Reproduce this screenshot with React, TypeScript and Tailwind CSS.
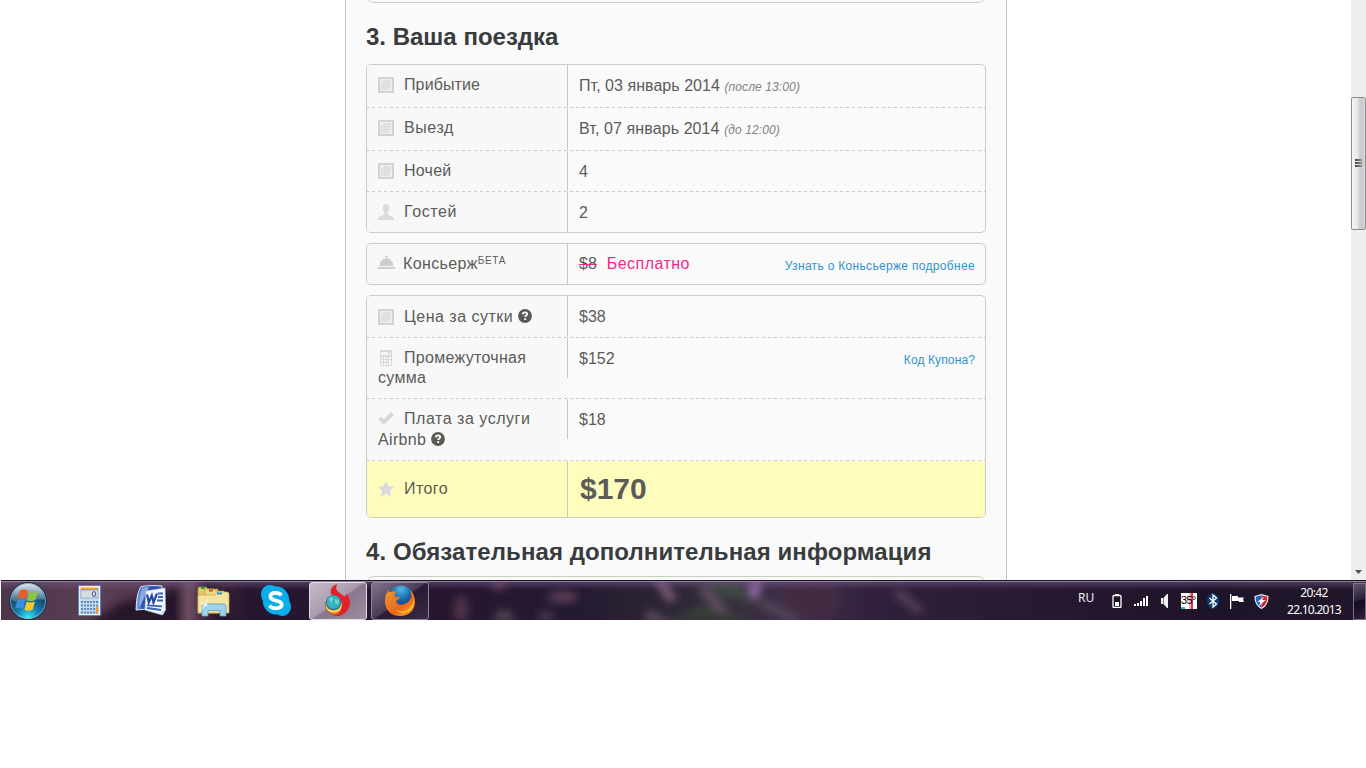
import type { ReactNode } from 'react'

const CalendarIcon = () => (
  <svg width="16" height="16" viewBox="0 0 16 16" className="inline-block align-top mt-[2px] mr-[10px]">
    <rect width="16" height="16" fill="#d2d2d2" />
    <rect x="2" y="2" width="12" height="12" fill="#f0f0f0" />
    <path d="M5 3h8v7h-2v3H3V5h2z" fill="#dddddd" />
    <path d="M5.500 3v10M8.500 3v10M11.500 3v10M3 5.500h10M3 8.500h10M3 11.500h10" stroke="#e8e8e8" strokeWidth=".6" />
  </svg>
)

const GuestIcon = () => (
  <svg width="16" height="16" viewBox="0 0 16 16" className="inline-block align-top mt-[2px] mr-[10px]">
    <path
      d="M8 0C5.700 0 4.600 1.600 4.700 4c.1 2.200 1 3.700 1.600 4.400v2.100c-.6.9-4.600 1.300-5.800 3C.1 14.200 0 15 0 16h16c0-1-.1-1.800-.5-2.500-1.200-1.700-5.200-2.100-5.800-3V8.400c.6-.7 1.500-2.200 1.600-4.400.1-2.400-1-4-3.300-4z"
      fill="#dcdcdc"
    />
  </svg>
)

const BellIcon = () => (
  <svg width="17" height="16" viewBox="0 0 17 16" className="inline-block align-top mt-[2px] mr-[8px]">
    <path d="M7 0h3v1H9v1.200c3.800.4 6.200 3.600 6.500 7.800h-14C1.800 5.800 4.200 2.600 8 2.200V1H7z" fill="#cecece" />
    <rect y="11" width="17" height="2" fill="#cecece" />
  </svg>
)

const CalculatorIcon = () => (
  <svg width="16" height="16" viewBox="0 0 16 16" className="inline-block align-top mt-[2px] mr-[10px]">
    <rect x="2" width="12" height="16" fill="#d9d9d9" />
    <rect x="3" y="2" width="10" height="3" fill="#f7f7f7" />
    <rect x="10" y="2" width="2" height="2" fill="#d9d9d9" />
    <path
      d="M3 7h2v2H3zM6 7h2v2H6zM9 7h1v2H9zM11 7h2v2h-2zM3 10h2v2H3zM6 10h2v2H6zM9 10h1v2H9zM11 10h2v5h-2zM3 13h2v2H3zM6 13h2v2H6zM9 13h1v2H9z"
      fill="#f7f7f7"
    />
  </svg>
)

const CheckIcon = () => (
  <svg width="16" height="16" viewBox="0 0 16 16" className="inline-block align-top mt-[2px] mr-[10px]">
    <path d="M1.500 8l4.300 4L14.500 3.500" fill="none" stroke="#d6d6d6" strokeWidth="4" />
  </svg>
)

const StarIcon = () => (
  <svg width="16" height="16" viewBox="0 0 16 16" className="inline-block align-top mt-[2px] mr-[10px]">
    <path
      d="M8 0l2.400 5 5.600.8-4 3.900 1 5.800-5-2.700-5 2.700 1-5.800-4-3.900L5.600 5z"
      fill="#dadade"
      stroke="#e6e6e8"
      strokeWidth=".6"
    />
  </svg>
)

const HelpIcon = ({ className = '' }: { className?: string }) => (
  <svg width="14" height="14" viewBox="0 0 14 14" className={`inline-block align-top ml-[4.500px] ${className}`}>
    <circle cx="7" cy="7" r="6.900" fill="#5a5a55" />
    <path d="M4.700 5.400c.1-1.300 1-2 2.300-2s2.200.7 2.200 1.700c0 1.500-2 1.500-2 3" fill="none" stroke="#fafafa" strokeWidth="1.900" />
    <rect x="6.200" y="9.200" width="2" height="1.800" fill="#fafafa" />
  </svg>
)

type RowProps = {
  label: ReactNode
  children: ReactNode
  height: string
  labelClass?: string
  valueClass?: string
  dividerClass?: string
  total?: boolean
  last?: boolean
}

function Row({
  label,
  children,
  height,
  labelClass = 'pt-[10px]',
  valueClass = 'pt-[11px]',
  dividerClass = 'h-full',
  total,
  last,
}: RowProps) {
  return (
    <div>
      <div className={`flex ${height} ${total ? 'bg-[#fffdbc]' : ''}`}>
        <div className={`w-[200px] shrink-0 pl-[11px] whitespace-nowrap ${total ? '' : 'bg-[#f8f8f8]'} ${labelClass}`}>
          {label}
        </div>
        <div className={`w-px shrink-0 bg-[#c9c9c4] ${dividerClass}`} />
        <div className={`flex-1 flex items-start justify-between pl-[11px] pr-[10px] whitespace-nowrap ${valueClass}`}>
          {children}
        </div>
      </div>
      {!last && (
        <div className="h-px bg-[repeating-linear-gradient(90deg,#c9c9c9_0_2px,transparent_2px_5px,#c9c9c9_5px_6px)]" />
      )}
    </div>
  )
}

function Box({ children, className = '' }: { children: ReactNode; className?: string }) {
  return (
    <div className={`border border-[#cbccc5] rounded-[5px] overflow-hidden text-[16px] leading-[20px] text-[#5b5b57] ${className}`}>
      {children}
    </div>
  )
}

function Booking() {
  return (
    <main className="ml-[345px] w-[662px] h-[580px] shrink-0 border-x border-[#c3c3c3] bg-[#fafafa] px-5 overflow-hidden">
      <div className="-mt-[17px] h-[20px] border border-[#cbccc5] rounded-[8px]" />
      <h2 className="mt-[20px] h-[28px] text-[24px] leading-[28px] font-bold text-[#393c3d] whitespace-nowrap">
        3. Ваша поездка
      </h2>

      <Box className="mt-[13px]">
        <Row height="h-[42px]" label={<><CalendarIcon /><span className="tracking-[0.12px]">Прибытие</span></>}>
          <span className="tracking-[0.04px]">
            Пт, 03 январь 2014 <i className="text-[12px] tracking-[0.12px] text-[#82837f]">(после 13:00)</i>
          </span>
        </Row>
        <Row height="h-[42px]" label={<><CalendarIcon /><span className="tracking-[0.6px]">Выезд</span></>}>
          <span className="tracking-[0.1px]">
            Вт, 07 январь 2014 <i className="text-[12px] tracking-[0.1px] text-[#82837f]">(до 12:00)</i>
          </span>
        </Row>
        <Row height="h-[40px]" label={<><CalendarIcon /><span className="tracking-[0.25px]">Ночей</span></>}>4</Row>
        <Row height="h-[40px]" label={<><GuestIcon /><span className="tracking-[0.6px]">Гостей</span></>} last>2</Row>
      </Box>

      <Box className="mt-[10px]">
        <Row
          height="h-[40px]"
          valueClass="pt-[10px]"
          label={
            <>
              <BellIcon />
              <span className="tracking-[0.37px]">Консьерж</span>
              <span className="inline-block align-top text-[10px] leading-[14px] tracking-[0.6px]">БЕТА</span>
            </>
          }
          last
        >
          <span>
            <span className="line-through decoration-[#ed2690]">$8</span>
            <span className="ml-[10px] tracking-[0.45px] text-[#f5288f]">Бесплатно</span>
          </span>
          <a className="text-[12px] leading-[24px] tracking-[0.32px] text-[#2f93cf]">Узнать о Коньсьерже подробнее</a>
        </Row>
      </Box>

      <Box className="mt-[10px]">
        <Row
          height="h-[41px]"
          labelClass="pt-[11px]"
          label={<><CalendarIcon /><span className="tracking-[0.48px]">Цена за сутки</span><HelpIcon className="mt-[2px]" /></>}
        >
          $38
        </Row>
        <Row
          height="h-[60px]"
          dividerClass="h-[40px]"
          label={<span className="tracking-[0.3px]"><CalculatorIcon />Промежуточная<br />сумма</span>}
        >
          <span>$152</span>
          <a className="text-[12px] leading-[22px] tracking-[0.12px] text-[#2f93cf]">Код Купона?</a>
        </Row>
        <Row
          height="h-[61px]"
          dividerClass="h-[40px]"
          labelClass="pt-[9px] leading-[21px]"
          label={
            <>
              <CheckIcon /><span className="tracking-[0.53px]">Плата за услуги</span>
              <br />
              <span className="tracking-[0.35px]">Airbnb</span><HelpIcon className="mt-[3px]" />
            </>
          }
        >
          $18
        </Row>
        <Row
          height="h-[56px]"
          labelClass="pt-[18px]"
          valueClass="pt-[8px]"
          label={<><StarIcon /><span className="tracking-[0.4px]">Итого</span></>}
          total
          last
        >
          <b className="ml-px text-[30px] leading-[40px]">$170</b>
        </Row>
      </Box>

      <h2 className="mt-[20px] h-[28px] text-[24px] leading-[28px] font-bold text-[#393c3d] tracking-[0.08px] whitespace-nowrap">
        4. Обязательная дополнительная информация
      </h2>
      <div className="mt-[10px] h-5 border border-[#cbccc5] rounded-[8px]" />
    </main>
  )
}

function Scrollbar() {
  return (
    <div className="w-[15px] h-[580px] shrink-0 bg-[#efefef] flex flex-col items-center">
      <div className="mt-[97px] h-[133px] w-full border border-[#8b8b8e] rounded-[2px] bg-[linear-gradient(90deg,#f6f6f6,#e6e6e8_45%,#cdcdd1_60%,#c9c9cd_85%,#e0e0e3)] flex flex-col items-center justify-center gap-px pb-[2px]">
        <div className="w-[7px] h-[2px] bg-[linear-gradient(90deg,#444,#999)]" />
        <div className="w-[7px] h-[2px] bg-[linear-gradient(90deg,#444,#999)]" />
        <div className="w-[7px] h-[2px] bg-[linear-gradient(90deg,#444,#999)]" />
      </div>
      <svg width="7" height="4" viewBox="0 0 7 4" className="mt-[340px]">
        <path d="M0 0h7L3.500 4z" fill="#505050" />
      </svg>
    </div>
  )
}

const StartOrb = () => (
  <svg width="38" height="38" viewBox="0 0 38 38" className="ml-[8px]">
    <defs>
      <radialGradient id="orb" cx="50%" cy="95%" r="90%">
        <stop offset="0" stopColor="#3fe4f7" />
        <stop offset=".35" stopColor="#137fae" />
        <stop offset=".7" stopColor="#174569" />
        <stop offset="1" stopColor="#6d8ca4" />
      </radialGradient>
      <linearGradient id="gloss" x2="0" y2="1">
        <stop offset="0" stopColor="#fff" stopOpacity=".75" />
        <stop offset="1" stopColor="#b9d4e6" stopOpacity=".25" />
      </linearGradient>
    </defs>
    <circle cx="19" cy="19" r="18.500" fill="url(#orb)" stroke="#1c2738" />
    <circle cx="19" cy="19" r="17.500" fill="none" stroke="#8fc4de" strokeOpacity=".7" />
    <path d="M2.500 18C3 8 10 2 19 2s16 6 16.500 16C26 15 12 23 2.500 18z" fill="url(#gloss)" />
    <path d="M11 8.500c2.700-1.500 5.400-1.400 7.800.2l-2.200 8.500c-2.500-1.600-5.100-1.600-7.800-.3z" fill="#ee5b22" />
    <path d="M20.200 9.700c2.700 1.400 5.600 1.400 8.500-.1l-2.300 8.500c-2.700 1.400-5.600 1.400-8.300-.2z" fill="#8cc63c" />
    <path d="M8.300 18.400c2.700-1.400 5.300-1.300 7.800.2L14 27c-2.500-1.600-5.200-1.600-7.900-.2z" fill="#3c8fe0" />
    <path d="M17.600 19.400c2.700 1.400 5.600 1.400 8.300 0l-2.200 8.300c-2.800 1.500-5.600 1.400-8.300 0z" fill="#fdc62b" />
  </svg>
)

const CalcApp = () => (
  <svg width="24" height="32" viewBox="0 0 24 32" className="ml-[31px]">
    <rect x=".5" y=".5" width="22" height="30" rx="1" fill="#c5dcf0" stroke="#5387ba" />
    <rect x="1.500" y="1.500" width="20" height="28" fill="none" stroke="#e8f3fc" />
    <rect x="3" y="3" width="17" height="2" fill="#f09a34" />
    <rect x="3" y="5" width="17" height="8" fill="#d5dce2" stroke="#8c98a5" strokeWidth=".7" />
    <ellipse cx="16" cy="9" rx="1.700" ry="2.500" fill="none" stroke="#3d5b80" />
    {[16, 19.500, 23, 26.500].map((y) =>
      [3, 6, 9, 12, 15, 18].map((x) => (
        <rect key={`${x}-${y}`} x={x} y={y} width="2" height="2" fill="#5d87b8" />
      )),
    )}
    <rect x="17.800" y="22" width="2.500" height="6.500" fill="#f39821" />
  </svg>
)

const WordApp = () => (
  <svg width="32" height="32" viewBox="0 0 32 32" className="ml-[33px]">
    <defs>
      <linearGradient id="wordBack">
        <stop offset="0" stopColor="#8db4ec" />
        <stop offset=".25" stopColor="#2b57b4" />
        <stop offset="1" stopColor="#2a50a2" />
      </linearGradient>
    </defs>
    <path d="M6 1.500C12 .5 20 .3 27 1l-1 22L1 25C1.500 16 2 8 6 1.500z" fill="url(#wordBack)" stroke="#dce9fa" />
    <path d="M7 2.500C5 9 4.500 16 4 22c4-5 6-12 10-20z" fill="#c4dafa" fillOpacity=".6" />
    <path d="M11 6l19-3 .5 22-3 5L10 25z" fill="#f4f7fd" stroke="#b6c8e4" strokeWidth=".7" />
    <path d="M12 9.500l1.800 8 3-7 1.700 7L22 8.500" fill="none" stroke="#27499b" strokeWidth="2.200" />
    <path d="M23 8.500h5M23 12h5M22 15.500h6M12 20.300l15 1M12 23l14 2" stroke="#3463b8" strokeWidth="1.800" />
    <path d="M27.500 30l3-5-4 1z" fill="#c9d7ed" />
  </svg>
)

const ExplorerApp = () => (
  <svg width="34" height="32" viewBox="0 0 34 32" className="ml-[30px]">
    <path d="M1 4c0-1 .6-2 1.600-2H9l2 2h10v24H1z" fill="#e6c96c" stroke="#a98e3d" strokeWidth=".7" />
    <rect x="4" y="2" width="4" height="2" fill="#22a822" />
    <path d="M8 6c0-1 .6-2 1.600-2H17l2 2h8v22H8z" fill="#f0d983" stroke="#b89b49" strokeWidth=".7" />
    <rect x="12" y="4.500" width="4" height="2" fill="#d64a22" />
    <path d="M1 10h17l2-3h10c1 0 2 .7 2 2v19H1z" fill="#f5e3a0" stroke="#c6a955" strokeWidth=".7" />
    <rect x="20" y="7.500" width="5" height="2" fill="#318ed2" />
    <path d="M5 31V22c0-2 1-3 3-3h18c2 0 3 1 3 3v9h-6v-5.500H11V31z" fill="#9ed2ed" stroke="#589dc4" strokeWidth=".8" />
    <path d="M11 13l-1.500 6 3 2.500-4-1L3 26l4-6-4-2 5 .5z" fill="#fff" fillOpacity=".85" />
  </svg>
)

const SkypeApp = () => (
  <svg width="30" height="31" viewBox="0 0 30 31" className="ml-[30px]">
    <path d="M8.500 0c2 0 3.500.5 5 1.200C21.600.7 28.500 7 28.300 16c1 1.500 1.700 3.200 1.700 5.300C30 26.700 26.300 31 21.500 31c-2 0-3.700-.5-5-1.400C8 30 1.700 23.500 1.800 15.200A9.300 9.300 0 010 9.600C0 4.300 3.700 0 8.500 0z" fill="#08aee9" />
    <path d="M20.500 10.200C19 8.500 17 7.800 14.700 7.800c-3.500 0-5.300 1.400-5.300 3.600 0 5.600 11.300 2.800 11.300 8.200 0 2.500-2.500 3.800-5.900 3.800-2.800 0-5-1-6.200-2.900" fill="none" stroke="#fff" strokeWidth="3.800" />
  </svg>
)

const TorchApp = () => (
  <svg width="26" height="33" viewBox="0 0 26 33">
    <path d="M12.500 0C8 1 4.500 5 6 10c2 1.500 5 1.500 8 4 5 5 4 12-1 16-2 1.300-4 1.700-6 1.500 6 2.500 17-1.500 18-12 .2-4-1.500-7.500-3.500-10-.2 2-1 3-2.500 3-2-2.500-6.500-4-7.500-7-.6-2 0-4 1-5.500z" fill="#e3202b" />
    <path d="M0 20c2-7 12-9 16-2.500 2.500 6 0 12-6.500 13.500C4 30.500 0 26 0 20z" fill="#a0522f" />
    <path d="M0 22c3 7 13 7 16.500-1 .5 6-3 9-7 9-5-.5-8.500-3-9.500-8z" fill="#f07d28" />
    <circle cx="8.700" cy="20.500" r="8" fill="#ffe14f" />
    <circle cx="8.500" cy="18.800" r="7.700" fill="#39758f" />
    <circle cx="8.500" cy="18" r="6.600" fill="#30b3bf" />
    <path d="M4 14c2-2 4-1 4 1s-2 2-1 4-3-1-3-5zM10 15l4 1-1 5-3-2z" fill="#8edcd7" fillOpacity=".7" />
  </svg>
)

const FirefoxApp = () => (
  <svg width="30" height="31" viewBox="0 0 30 31">
    <defs>
      <linearGradient id="fox" x2="1" y2="1">
        <stop offset="0" stopColor="#f09a35" />
        <stop offset=".6" stopColor="#e8661b" />
        <stop offset="1" stopColor="#ffb52e" />
      </linearGradient>
      <radialGradient id="globe" cx="50%" cy="15%" r="80%">
        <stop offset="0" stopColor="#56b8e8" />
        <stop offset=".5" stopColor="#1667ad" />
        <stop offset="1" stopColor="#122f6c" />
      </radialGradient>
    </defs>
    <circle cx="16" cy="13.500" r="13" fill="url(#globe)" />
    <path d="M2 4c1 2 2 3 4 3 2-1 4-1 5 0-1.500 1.500-2 3-1 4.500l5 1c0 1.500-3 2-4 3.500 1 3 4 5 8 3 3-1 5-2 7-6 .5-3 0-6-1-8 4 4 5 8 5 12 0 8-6 14-15 14S0 25 0 16c0-5 1-8 3-9z" fill="url(#fox)" />
    <path d="M25 5c5 6 5 14-1 19-4 3-9 3-13 1 5 5 14 3 17-4 2-6 1-12-3-16z" fill="#fdc52d" />
  </svg>
)

function Tray() {
  return (
    <div className="ml-auto flex items-center h-full pt-px">
      <span className="text-[12px] leading-[16px] mb-[7px] w-[17px] text-[#eee]">RU</span>
      <svg width="10" height="14" viewBox="0 0 10 14" className="ml-[17px]">
        <path d="M3 0h4v2H3z" fill="#fff" />
        <rect x="1" y="1.500" width="8" height="12" rx="1" fill="#1b1424" stroke="#fff" strokeWidth="1.300" />
        <rect x="3" y="8" width="4" height="4" fill="#fff" />
      </svg>
      <svg width="15" height="12" viewBox="0 0 15 12" className="ml-[12px]">
        <path d="M0 9h2v2H0zM3 8h2v3H3zM6 6h2v5H6zM9 3h2v8H9zM12 1h2v10h-2z" fill="#fff" />
      </svg>
      <svg width="8" height="14" viewBox="0 0 8 14" className="ml-[12px]">
        <path d="M0 4h2v6H0zM2.500 4L6 0h1v14H6l-3.500-4z" fill="#f2f2f2" />
      </svg>
      <div className="ml-[12px] w-[16px] h-[16px] bg-[linear-gradient(90deg,#fff_0_50%,#f5a9b0_50%_62%,#e2384b_62%_75%,#fff_75%)] font-['Liberation_Sans',Arial,sans-serif] text-[11px] leading-[14px] tracking-[-0.7px] text-black flex flex-col justify-between whitespace-nowrap">
        <span>35°</span>
        <span className="w-[4px] h-[2px] shrink-0 bg-[#18bfd0]" />
      </div>
      <svg width="12" height="16" viewBox="0 0 12 16" className="ml-[10px]">
        <ellipse cx="6" cy="8" rx="6" ry="7.800" fill="#123a70" />
        <path d="M2.500 5l7 6L6 14V2l3.500 3-7 6" fill="none" stroke="#fff" strokeWidth="1.300" />
      </svg>
      <svg width="15" height="15" viewBox="0 0 15 15" className="ml-[11px]">
        <path d="M0 0h1.300v15H0zM2 2h6v1.500h6l-1 2 1 2.500H9V7H2z" fill="#fff" />
      </svg>
      <svg width="15" height="15" viewBox="0 0 15 15" className="ml-[9px]">
        <path d="M7.500 0l7 2c.2 6-2 10.500-7 13-5-2.500-7.200-7-7-13z" fill="#f0f0f4" />
        <path d="M7.500 1.200L1.600 2.800C1.700 8 3.300 11.400 7.500 13.800z" fill="#1b63c6" />
        <path d="M7.500 1.200l5.900 1.600c-.1 5.200-1.700 8.600-5.900 11z" fill="#dc2530" />
        <path d="M10 2.500L3.500 8h3L5 12l6.500-6H8z" fill="#fff" />
      </svg>
      <div className="ml-[17px] w-[56px] text-center text-[12px] leading-[17px] text-white whitespace-nowrap">
        <div className="tracking-[-0.6px]">20:42</div>
        <div className="tracking-[-0.75px]">22.10.2013</div>
      </div>
      <div className="ml-[11px] w-[13px] h-[37px] border border-[#7c7189] bg-[linear-gradient(165deg,#5d536b,#2a2036_45%,#130b1e_50%,#2b203a)]" />
    </div>
  )
}

function Taskbar() {
  return (
    <footer className="relative ml-px h-[40px] bg-[#23142f] border-t border-[#17101f] overflow-hidden font-['Noto_Sans','Open_Sans',sans-serif]">
      {/* blurred wallpaper showing through the glass */}
      <svg width="1365" height="39" viewBox="0 0 1365 39" className="absolute inset-0">
        <defs>
          <linearGradient id="glass">
            <stop offset="0" stopColor="#4c3549" />
            <stop offset=".07" stopColor="#5b3f54" />
            <stop offset=".14" stopColor="#4a3047" />
            <stop offset=".18" stopColor="#27162f" />
            <stop offset=".33" stopColor="#27162f" />
            <stop offset=".42" stopColor="#241a31" />
            <stop offset=".52" stopColor="#312a37" />
            <stop offset=".58" stopColor="#40304a" />
            <stop offset=".64" stopColor="#30203b" />
            <stop offset=".8" stopColor="#25172f" />
            <stop offset=".88" stopColor="#1e142a" />
            <stop offset="1" stopColor="#211629" />
          </linearGradient>
          <linearGradient id="edge" x2="0" y2="1">
            <stop offset="0" stopColor="#7c5c91" stopOpacity=".55" />
            <stop offset="1" stopColor="#7c5c91" stopOpacity="0" />
          </linearGradient>
          <filter id="soft" filterUnits="userSpaceOnUse" x="-20" y="-40" width="1405" height="120">
            <feGaussianBlur stdDeviation="4.500" />
          </filter>
        </defs>
        <rect width="1365" height="39" fill="url(#glass)" />
        <g filter="url(#soft)">
          <path d="M85 45l35-24 60-14v38z" fill="#25162c" />
          <path d="M198 -5h18l20 50h-20z" fill="#25162c" />
          <path d="M182 -5h12v50h-12z" fill="#6f5064" />
          <ellipse cx="460" cy="28" rx="7" ry="14" fill="#4f3446" />
          <ellipse cx="498" cy="4" rx="8" ry="5" fill="#5d3d52" />
          <ellipse cx="562" cy="16" rx="15" ry="5" fill="#62445c" />
          <ellipse cx="503" cy="36" rx="10" ry="7" fill="#4e4251" />
          <ellipse cx="545" cy="36" rx="8" ry="6" fill="#44374a" />
          <path d="M700 0h38l20 22-40-6z" fill="#3d4643" />
          <path d="M665 39l40-16 50 16z" fill="#384039" />
          <path d="M652 -4h10l14 24h-10z" fill="#83607f" />
          <path d="M695 8l10-2 24 24h-12z" fill="#655068" />
          <path d="M645 28l30 14h-30z" fill="#5b4b5c" />
          <ellipse cx="812" cy="16" rx="28" ry="22" fill="#432a42" />
          <ellipse cx="754" cy="6" rx="6" ry="12" fill="#9068a2" />
          <path d="M762 18l40 21h-14l-30-14z" fill="#564a5c" />
          <path d="M898 6l26 24-8 3-24-20z" fill="#52405c" />
        </g>
        <rect width="1365" height="9" fill="url(#edge)" />
        <rect width="1365" height="1" fill="#a795b4" fillOpacity=".75" />
      </svg>
      <div className="relative h-[39px] flex items-center">
        <StartOrb />
        <CalcApp />
        <WordApp />
        <ExplorerApp />
        <SkypeApp />
        <div className="ml-[18px] w-[58px] h-[38px] rounded-[3px] border border-[#e2dce7] bg-[linear-gradient(145deg,#c7bccb,#a99bad_48%,#89788f_52%,#9d8ba1)] flex items-center justify-center">
          <TorchApp />
        </div>
        <div className="ml-[4px] w-[58px] h-[38px] rounded-[3px] border border-[#8d8298] bg-[linear-gradient(145deg,#81758a,#4c3c57_48%,#291a36_52%,#392b45)] flex items-center justify-center">
          <FirefoxApp />
        </div>
        <Tray />
      </div>
    </footer>
  )
}

export default function App() {
  return (
    <div className="w-[1366px] h-[768px] bg-white overflow-hidden font-['Liberation_Sans',Arial,sans-serif]">
      <div className="flex justify-between h-[580px]">
        <Booking />
        <Scrollbar />
      </div>
      <Taskbar />
    </div>
  )
}
